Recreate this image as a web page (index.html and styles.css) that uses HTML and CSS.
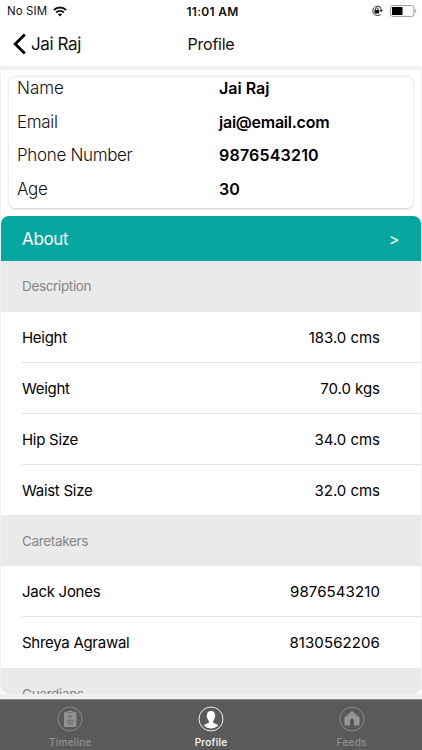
FILE: index.html
```
<!DOCTYPE html>
<html lang="en">
<head>
<meta charset="utf-8">
<title>Profile</title>
<link rel="stylesheet" href="styles.css">
</head>
<body>
<div class="screen">
  <div class="status">
    <div class="carrier"><span>No SIM</span>
      <svg width="14" height="11" viewBox="0 0 14 11"><g fill="none" stroke="#111" stroke-width="2"><path d="M.9 4C4.3.7 9.7.7 13.1 4"/><path d="M3.2 6.5c2.2-2 5.4-2 7.6 0"/></g><path d="M4.8 8.2c1.3-1.1 3.1-1.1 4.4 0L7 10.4z" fill="#111"/></svg>
    </div>
    <div class="clock">11:01 AM</div>
    <div class="indicators">
      <svg width="13" height="12" viewBox="0 0 13 12"><path d="M9.6 2.3A4.7 4.7 0 1 0 9.8 9.2M8.5 1.6A4.7 4.7 0 0 1 10.2 5.4" fill="none" stroke="#333" stroke-width="1"/><path d="M8.4 5h3.4l-1.7 2.3z" fill="#222"/><rect x="3.5" y="5.1" width="4.6" height="3.5" rx=".4" fill="#111"/><path d="M4.4 5.4V4.2a1.4 1.4 0 0 1 2.8 0v1.2" fill="none" stroke="#111" stroke-width=".9"/></svg>
      <svg width="28" height="12" viewBox="0 0 28 12"><rect x=".6" y=".6" width="23.4" height="10.8" rx="2.4" fill="#fff" stroke="#999" stroke-width="1"/><rect x="2" y="2" width="10.5" height="8" rx=".6" fill="#000"/><path d="M25.2 4.1c1.5.4 1.5 3.4 0 3.8z" fill="#999"/></svg>
    </div>
  </div>
  <header class="nav">
    <a class="back"><svg width="14" height="22" viewBox="0 0 14 22"><path d="M11.8 1.6 2.2 11l9.6 9.4" fill="none" stroke="#000" stroke-width="2.8"/></svg><span>Jai Raj</span></a>
    <h1>Profile</h1>
  </header>
  <main class="content">
    <dl class="card">
      <dt>Name</dt><dd>Jai Raj</dd>
      <dt>Email</dt><dd class="mail">jai@email.com</dd>
      <dt>Phone Number</dt><dd class="digits">9876543210</dd>
      <dt>Age</dt><dd>30</dd>
    </dl>
    <div class="list">
      <div class="about"><span>About</span><span class="more">&gt;</span></div>
      <h2>Description</h2>
      <div class="row"><span>Height</span><span class="value">183.0 cms</span></div>
      <div class="row"><span>Weight</span><span class="value">70.0 kgs</span></div>
      <div class="row"><span>Hip Size</span><span class="value">34.0 cms</span></div>
      <div class="row last"><span>Waist Size</span><span class="value">32.0 cms</span></div>
      <h2>Caretakers</h2>
      <div class="row"><span>Jack Jones</span><span class="value number">9876543210</span></div>
      <div class="row last"><span>Shreya Agrawal</span><span class="value number">8130562206</span></div>
      <h2>Guardians</h2>
    </div>
  </main>
  <nav class="tabs">
    <div class="tab"><svg width="26" height="26" viewBox="0 0 26 26"><circle cx="13" cy="13" r="12" fill="none" stroke="#8d8d8d"/><rect x="7" y="5.8" width="12.4" height="15.2" rx="1.8" fill="#929292"/><path d="M10.5 6.5h5.4M13.2 8.7v3.6M11.4 10.5H15M9.6 14.3h7.2M9.6 16.4h7.2M11 18.3h4.5" stroke="#656565" stroke-width=".9"/><path d="M11 4.8h4.4v1.3H11z" fill="#999"/></svg><span>Timeline</span></div>
    <div class="tab active"><svg width="26" height="26" viewBox="0 0 26 26"><circle cx="13" cy="13" r="12" fill="none" stroke="#eee"/><path d="M13 5.1c-3 0-4.2 1.8-4 4.5-.5.2-.3 2 .4 2.4.2 1.4.8 2.3 1.5 2.9v1.7c-1 1.1-4 1.1-5 3 4 4 10.200 4 14.200 0-1-1.900-4-1.900-5-3v-1.700c.7-.6 1.300-1.500 1.500-2.900.7-.4.900-2.200.4-2.400.2-2.700-1-4.500-4-4.500z" fill="#fff"/></svg><span>Profile</span></div>
    <div class="tab"><svg width="26" height="26" viewBox="0 0 26 26"><circle cx="13" cy="13" r="12" fill="none" stroke="#8d8d8d"/><path d="m13 5 7.500 6.500v8H15v-5a2 2 0 0 0-4 0v5H5.500v-8z" fill="#959595"/></svg><span>Feeds</span></div>
  </nav>
</div>
</body>
</html>
```
FILE: styles.css
```
* { box-sizing: border-box; }
body { margin: 0; background: #efeff4; font-family: Inter, "Liberation Sans", sans-serif; color: #111; }
svg { display: block; flex: none; }
h1, h2, dl, dd { margin: 0; font-weight: 400; }
.screen { width: 422px; height: 750px; display: flex; flex-direction: column; overflow: hidden; }
.status { height: 22px; display: grid; grid-template-columns: 1fr 1fr 1fr; align-items: center; padding: 0 4px 0 7px; background: #fff; font-size: 11.5px; }
.carrier { display: flex; align-items: center; gap: 6px; letter-spacing: .1px; }
.clock { text-align: center; font-size: 12px; font-weight: 600; letter-spacing: .3px; }
.indicators { display: flex; justify-content: flex-end; align-items: center; gap: 6px; }
.nav { height: 44px; flex: none; display: grid; grid-template-columns: 1fr 1fr 1fr; align-items: center; background: #fff; padding: 0 13px; }
.back { display: flex; align-items: center; gap: 4px; font-size: 17px; letter-spacing: -.4px; }
.nav h1 { text-align: center; font-size: 16px; letter-spacing: -.25px; }
.content { height: 624px; flex: none; margin: 4px 1px 5px; padding-top: 7px; background: #fff; border-radius: 0 0 3px 3px; overflow: hidden; }
.card { height: 131px; margin: 0 8px; padding-left: 8px; display: grid; grid-template-columns: 202px 1fr; grid-template-rows: repeat(4, 33.6px); align-content: start; line-height: 22px; font-size: 17px; border-radius: 6px; box-shadow: 0 .5px 2.5px rgba(0,0,0,.2); }
.card dt { font-weight: 300; letter-spacing: -.33px; }
.card dt:first-child { letter-spacing: 0; }
.card dd { font-weight: 600; font-size: 16px; color: #000; }
.card .mail { letter-spacing: -.25px; }
.card .digits { letter-spacing: .2px; }
.list { margin-top: 8px; height: 478px; overflow: hidden; border-radius: 8px; }
.about { height: 45px; display: flex; justify-content: space-between; align-items: center; padding: 0 22px 0 21px; background: #05a69e; color: #fff; font-size: 17px; letter-spacing: -.35px; }
.more { font-size: 16px; }
.list h2 { height: 50.9px; display: flex; align-items: center; padding-left: 21px; background: #eaeaea; color: #858585; font-size: 13.5px; letter-spacing: -.35px; }
.row { height: 50.9px; display: flex; justify-content: space-between; align-items: center; margin-left: 21px; padding: 1.2px 41px 0 0; border-bottom: 1px solid #e5e5e7; font-size: 15px; color: #000; letter-spacing: -.28px; }
.value { letter-spacing: -.03px; }
.value.number { letter-spacing: .1px; }
.row.last { border-color: transparent; }
.tabs { height: 51px; flex: none; display: grid; grid-template-columns: repeat(3, 1fr); background: #5a5a5a; border-top: 1px solid #8b8b8d; }
.tab { display: flex; flex-direction: column; align-items: center; padding-top: 6px; gap: 4px; color: #929292; font-size: 10px; line-height: 13px; font-weight: 500; letter-spacing: .25px; }
.tab.active { color: #fff; }
```
